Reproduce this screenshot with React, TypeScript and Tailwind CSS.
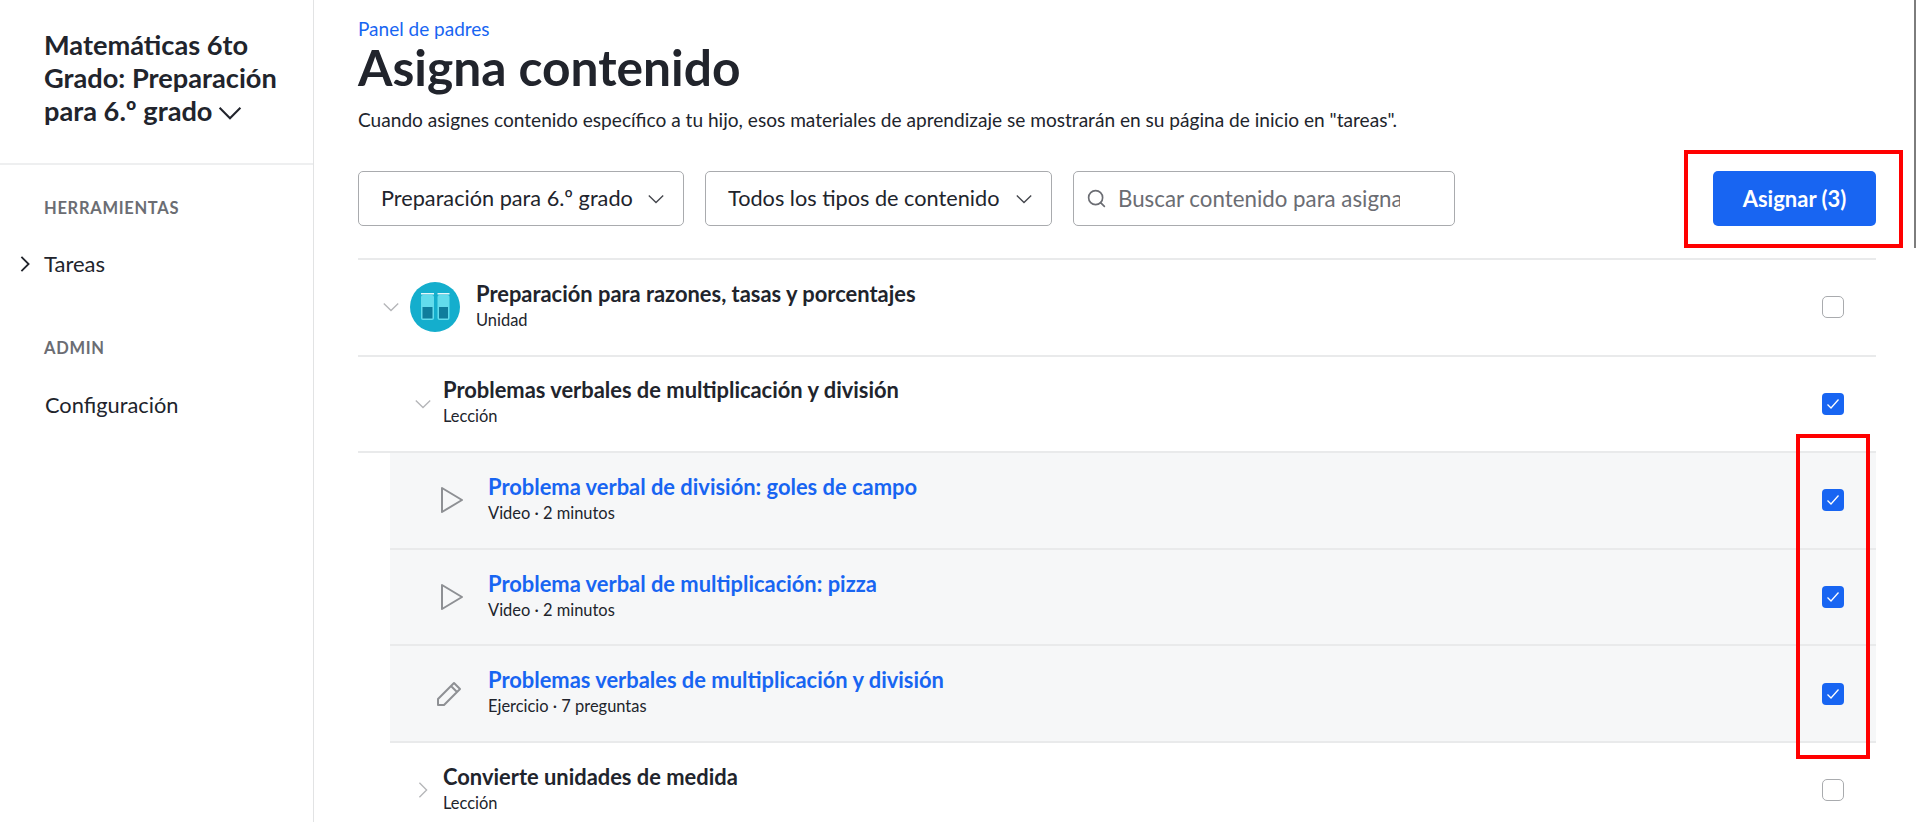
import { Search } from 'lucide-react';

function Chevron({ dir, className, width = 1.5 }: { dir: 'down' | 'right'; className?: string; width?: number }) {
  return (
    <svg viewBox="0 0 20 20" fill="none" stroke="currentColor" strokeWidth={width} className={className}>
      {dir === 'down' ? <path d="M2 6l8 8 8-8" /> : <path d="M6 2l8 8-8 8" />}
    </svg>
  );
}

function Checkbox({ checked }: { checked?: boolean }) {
  if (checked) {
    return (
      <div className="ml-auto mr-[32px] flex h-[22px] w-[22px] shrink-0 items-center justify-center rounded-[4px] bg-[#1865f2]">
        <svg viewBox="0 0 14 14" fill="none" stroke="#fff" strokeWidth="1.3" className="h-[14px] w-[14px]">
          <path d="M1.5 7.5l3.5 3.5 7.5-8.5" />
        </svg>
      </div>
    );
  }
  return <div className="ml-auto mr-[32px] h-[22px] w-[22px] shrink-0 rounded-[5px] border-[1.5px] border-[#a9abae] bg-white" />;
}

function RowText({ title, sub, link }: { title: string; sub: string; link?: boolean }) {
  return (
    <div className="flex flex-col pb-[2px]">
      <span className={`text-[21.9px] leading-[23px] font-bold ${link ? 'text-[#1865f2]' : 'text-[#21242c]'}`}>{title}</span>
      <span className="mt-[4px] text-[16.45px] leading-[22px] text-[#21242c]">{sub}</span>
    </div>
  );
}

function UnitIcon() {
  return (
    <svg viewBox="0 0 50 50" className="h-[50px] w-[50px] shrink-0">
      <circle cx="25" cy="25" r="25" fill="#14aecd" />
      <rect x="11" y="13" width="13" height="25" rx="2" fill="#62dcec" />
      <rect x="27.5" y="13" width="12" height="25" rx="2" fill="#62dcec" />
      <rect x="11" y="11" width="13" height="1.5" fill="#e4f7fa" />
      <rect x="27.5" y="11" width="12" height="1.5" fill="#e4f7fa" />
      <rect x="12.5" y="25" width="10" height="11.5" fill="#0f7d9c" />
      <rect x="29" y="25" width="9" height="11.5" fill="#0f7d9c" />
    </svg>
  );
}

function PlayIcon() {
  return (
    <svg viewBox="0 0 24 28" fill="none" stroke="#8e9094" strokeWidth="2" strokeLinejoin="round" className="h-[28px] w-[24px]">
      <path d="M2 2l20 12L2 26z" />
    </svg>
  );
}

function PencilIcon() {
  return (
    <svg viewBox="0 0 26 26" fill="none" stroke="#8e9094" strokeWidth="2" strokeLinejoin="round" className="h-[26px] w-[26px]">
      <path d="M2 24v-6L18 2l6 6L8 24zM15 5l6 6" />
    </svg>
  );
}

function SelectBox({ label, className }: { label: string; className: string }) {
  return (
    <div className={`flex h-[55px] shrink-0 items-center justify-between rounded-[5px] border-[1.5px] border-[#a9abae] pl-[22px] pr-[18px] text-[21.7px] text-[#21242c] ${className}`}>
      <span>{label}</span>
      <Chevron dir="down" className="h-[18px] w-[18px] text-[#44464c]" />
    </div>
  );
}

const rowLine = 'flex h-[96.6px] items-center border-b-2 border-[#e9eaeb]';

export default function App() {
  return (
    <div className="relative flex h-[822px] w-[1920px] overflow-hidden bg-white font-['Lato',sans-serif] text-[#21242c]">
      <aside className="w-[314px] shrink-0 border-r border-[#e2e3e4]">
        <div className="h-[165px] border-b-2 border-[#eeeff0] pl-[44px] pr-[30px] pt-[28px]">
          <div className="text-[27.2px] leading-[33px] font-bold">
            Matemáticas 6to Grado: Preparación para 6.º grado
            <Chevron dir="down" className="ml-[4px] inline-block h-[26px] w-[26px] align-[-5px]" width={1.6} />
          </div>
        </div>
        <div className="pl-[44px] pt-[34px] text-[16.5px] leading-[18px] font-bold tracking-[0.7px] text-[#6b6d73]">HERRAMIENTAS</div>
        <div className="relative mt-[33px] pl-[44px] text-[22px] leading-[28px]">
          <Chevron dir="right" className="absolute left-[16px] top-[5px] h-[18px] w-[18px]" width={2} />
          Tareas
        </div>
        <div className="pl-[44px] pt-[61px] text-[16.5px] leading-[18px] font-bold tracking-[0.7px] text-[#6b6d73]">ADMIN</div>
        <div className="mt-[34px] pl-[45px] text-[21.8px] leading-[28px]">Configuración</div>
      </aside>

      <main className="ml-[44px] w-[1518px] shrink-0">
        <div className="pt-[18px] text-[19px] leading-[22px] text-[#1865f2]">Panel de padres</div>
        <h1 className="mt-[-3px] text-[49.7px] leading-[60px] font-bold">Asigna contenido</h1>
        <p className="mt-[12px] text-[19.1px] leading-[22px]">
          Cuando asignes contenido específico a tu hijo, esos materiales de aprendizaje se mostrarán en su página de inicio en "tareas".
        </p>

        <div className="mt-[40px] flex h-[55px] items-center">
          <SelectBox label="Preparación para 6.º grado" className="w-[326px]" />
          <SelectBox label="Todos los tipos de contenido" className="ml-[21px] w-[347px]" />
          <div className="ml-[21px] flex h-[55px] w-[382px] items-center rounded-[5px] border-[1.5px] border-[#a9abae] pl-[12px]">
            <Search className="h-[21px] w-[21px] shrink-0 text-[#6b6d73]" strokeWidth={1.9} />
            <input
              placeholder="Buscar contenido para asignar"
              className="ml-[11px] w-[282px] bg-transparent text-[22.3px] outline-none placeholder:text-[#6b6d73]"
            />
          </div>
          <button className="ml-auto h-[55px] w-[163px] rounded-[5px] bg-[#1865f2] text-[22px] font-bold text-white">Asignar (3)</button>
        </div>

        <div className="mt-[32px] border-t-2 border-[#e9eaeb]">
          <div className={rowLine}>
            <Chevron dir="down" className="ml-[24px] h-[18px] w-[18px] text-[#b5b6b9]" />
            <div className="ml-[10px]"><UnitIcon /></div>
            <div className="ml-[16px]"><RowText title="Preparación para razones, tasas y porcentajes" sub="Unidad" /></div>
            <Checkbox />
          </div>
          <div className={rowLine}>
            <Chevron dir="down" className="ml-[56px] h-[18px] w-[18px] text-[#b5b6b9]" />
            <div className="ml-[11px]"><RowText title="Problemas verbales de multiplicación y división" sub="Lección" /></div>
            <Checkbox checked />
          </div>
          <div className="ml-[32px]">
            <div className={`${rowLine} bg-[#f6f7f8]`}>
              <div className="ml-[50px] flex w-[48px]"><PlayIcon /></div>
              <RowText link title="Problema verbal de división: goles de campo" sub="Video · 2 minutos" />
              <Checkbox checked />
            </div>
            <div className={`${rowLine} bg-[#f6f7f8]`}>
              <div className="ml-[50px] flex w-[48px]"><PlayIcon /></div>
              <RowText link title="Problema verbal de multiplicación: pizza" sub="Video · 2 minutos" />
              <Checkbox checked />
            </div>
            <div className={`${rowLine} bg-[#f6f7f8]`}>
              <div className="ml-[46px] flex w-[52px]"><PencilIcon /></div>
              <RowText link title="Problemas verbales de multiplicación y división" sub="Ejercicio · 7 preguntas" />
              <Checkbox checked />
            </div>
          </div>
          <div className={rowLine}>
            <Chevron dir="right" className="ml-[56px] h-[18px] w-[18px] text-[#b5b6b9]" />
            <div className="ml-[11px]"><RowText title="Convierte unidades de medida" sub="Lección" /></div>
            <Checkbox />
          </div>
        </div>
      </main>

      {/* red highlight boxes drawn over the page */}
      <div className="absolute left-[1684px] top-[150px] h-[98px] w-[219px] border-4 border-[#ff0000]" />
      <div className="absolute left-[1796px] top-[434px] h-[325px] w-[74px] border-4 border-[#ff0000]" />
      <div className="absolute left-[1914px] top-0 h-[248px] w-[2px] bg-[#7d7d7d]" />
    </div>
  );
}
